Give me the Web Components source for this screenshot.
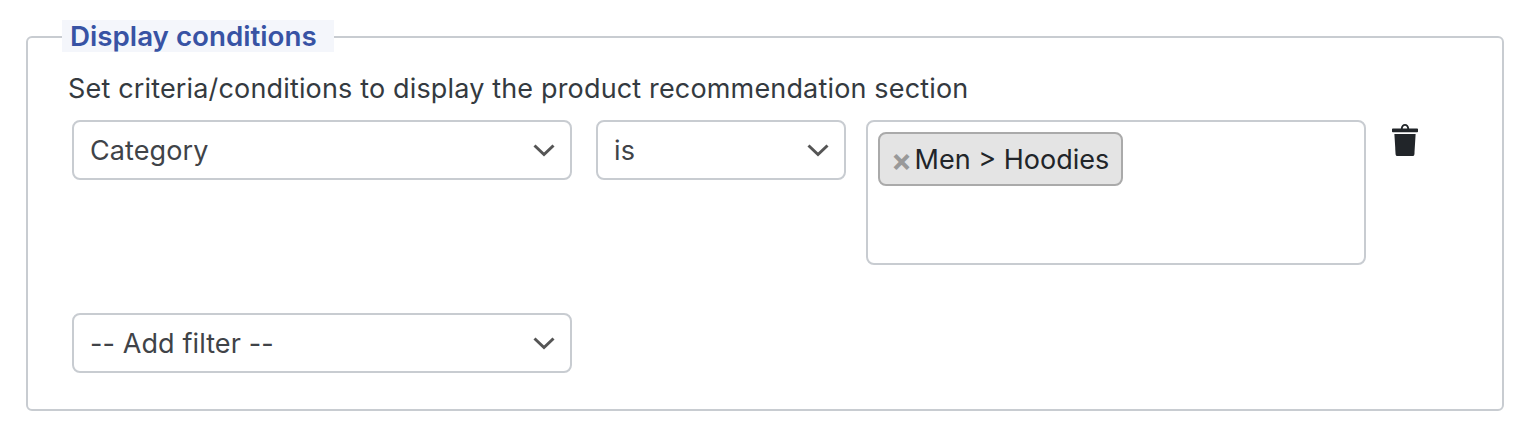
<!DOCTYPE html>
<html lang="en">
<head>
<meta charset="utf-8">
<title>Display conditions</title>
<style>
  html, body { margin: 0; background: #fff; }
  body { padding: 20px 26px 0; font-family: Inter, "Liberation Sans", sans-serif; color: #343a40; }
</style>
</head>
<body>
<condition-panel heading="Display conditions">
  <span slot="hint">Set criteria/conditions to display the product recommendation section</span>
  <filter-row>
    <select-box style="width:500px">Category</select-box>
    <select-box style="width:250px">is</select-box>
    <tag-input><tag-chip>Men &gt; Hoodies</tag-chip></tag-input>
    <trash-button></trash-button>
  </filter-row>
  <select-box slot="footer" style="width:500px">-- Add filter --</select-box>
</condition-panel>

<script>
class ConditionPanel extends HTMLElement {
  constructor() {
    super();
    this.attachShadow({ mode: 'open' });
    this.shadowRoot.innerHTML = `
      <style>
        :host { display: block; width: 1478px; }
        fieldset {
          margin: 0;
          padding: 0 46px 36px 40px;
          height: 391px;
          box-sizing: border-box;
          border: 2px solid #c8ccd1;
          border-radius: 6px;
        }
        /* 34px box so the border lands 1px lower, only the top 32px is tinted */
        legend {
          margin: 0 0 2px -6px;
          padding: 0 17px 0 8px;
          height: 34px;
          box-sizing: border-box;
          line-height: 32px;
          background: linear-gradient(#f4f6fb 32px, #fff 32px);
          color: #3853a4;
          font-size: 27.75px;
          font-weight: 600;
        }
        .hint { font-size: 27px; letter-spacing: .16px; line-height: 34px; margin: 16px 0 14px; }
        .body { margin-left: 4px; }
        .footer { margin-top: 48px; }
      </style>
      <fieldset>
        <legend>${this.getAttribute('heading')}</legend>
        <div class="hint"><slot name="hint"></slot></div>
        <div class="body">
          <slot></slot>
          <div class="footer"><slot name="footer"></slot></div>
        </div>
      </fieldset>
    `;
  }
}

class FilterRow extends HTMLElement {
  constructor() {
    super();
    this.attachShadow({ mode: 'open' });
    this.shadowRoot.innerHTML = `
      <style>
        :host { display: flex; align-items: flex-start; }
        ::slotted(select-box) { margin-right: 24px; }
      </style>
      <slot></slot>
    `;
  }
}

class SelectBox extends HTMLElement {
  constructor() {
    super();
    this.attachShadow({ mode: 'open' });
    this.shadowRoot.innerHTML = `
      <style>
        :host {
          display: flex;
          align-items: center;
          justify-content: space-between;
          box-sizing: border-box;
          height: 60px;
          padding: 0 14px 0 16px;
          border: 2px solid #c8ccd1;
          border-radius: 8px;
          background: #fff;
          color: #404348;
          font-size: 27px;
          letter-spacing: .1px;
        }
        svg { display: block; flex: none; }
      </style>
      <span><slot></slot></span>
      <svg width="24" height="16" viewBox="0 0 24 16" fill="none">
        <path d="M2.500 3.500 12 12.500 21.500 3.500" stroke="#555" stroke-width="3"/>
      </svg>
    `;
  }
}

class TagInput extends HTMLElement {
  constructor() {
    super();
    this.attachShadow({ mode: 'open' });
    this.shadowRoot.innerHTML = `
      <style>
        :host {
          display: flex;
          align-items: flex-start;
          box-sizing: border-box;
          width: 500px;
          height: 145px;
          margin-left: -4px;
          padding: 10px;
          border: 2px solid #c8ccd1;
          border-radius: 8px;
          background: #fff;
        }
      </style>
      <slot></slot>
    `;
  }
}

class TagChip extends HTMLElement {
  constructor() {
    super();
    this.attachShadow({ mode: 'open' });
    this.shadowRoot.innerHTML = `
      <style>
        :host {
          display: flex;
          align-items: center;
          box-sizing: border-box;
          height: 54px;
          padding: 0 12px 0 11px;
          border: 2px solid #aaa;
          border-radius: 8px;
          background: #e4e4e4;
          color: #212529;
          font-size: 27px;
        }
        .x { color: #999; font-weight: 700; margin-right: 2.5px; font-size: 31px; line-height: 1; }
      </style>
      <span class="x">×</span><slot></slot>
    `;
  }
}

class TrashButton extends HTMLElement {
  constructor() {
    super();
    this.attachShadow({ mode: 'open' });
    this.shadowRoot.innerHTML = `
      <style>
        :host { display: block; margin: 4px 0 0 26px; line-height: 0; }
      </style>
      <svg width="26" height="32" viewBox="0 0 26 32" aria-label="Delete">
        <path fill="#212529" d="M8.800 4.500C9 1.800 10.800 0 13 0s4 1.800 4.200 4.500h8c.5 0 .8.300.8.800v2.100c0 .5-.3.800-.8.800H.8C.3 8.200 0 7.900 0 7.400V5.300C0 4.800 .3 4.500 .8 4.500zM10.700 4.500h4.600c-.2-1.600-1.100-2.700-2.300-2.700S10.900 2.900 10.700 4.500z" fill-rule="evenodd"/>
        <path fill="#212529" d="M2.400 10h21.200l-1.200 20.200c-.1 1.100-.7 1.800-1.800 1.800H5.400c-1.100 0-1.700-.7-1.800-1.800z"/>
      </svg>
    `;
  }
}

customElements.define('condition-panel', ConditionPanel);
customElements.define('filter-row', FilterRow);
customElements.define('select-box', SelectBox);
customElements.define('tag-input', TagInput);
customElements.define('tag-chip', TagChip);
customElements.define('trash-button', TrashButton);
</script>
</body>
</html>
